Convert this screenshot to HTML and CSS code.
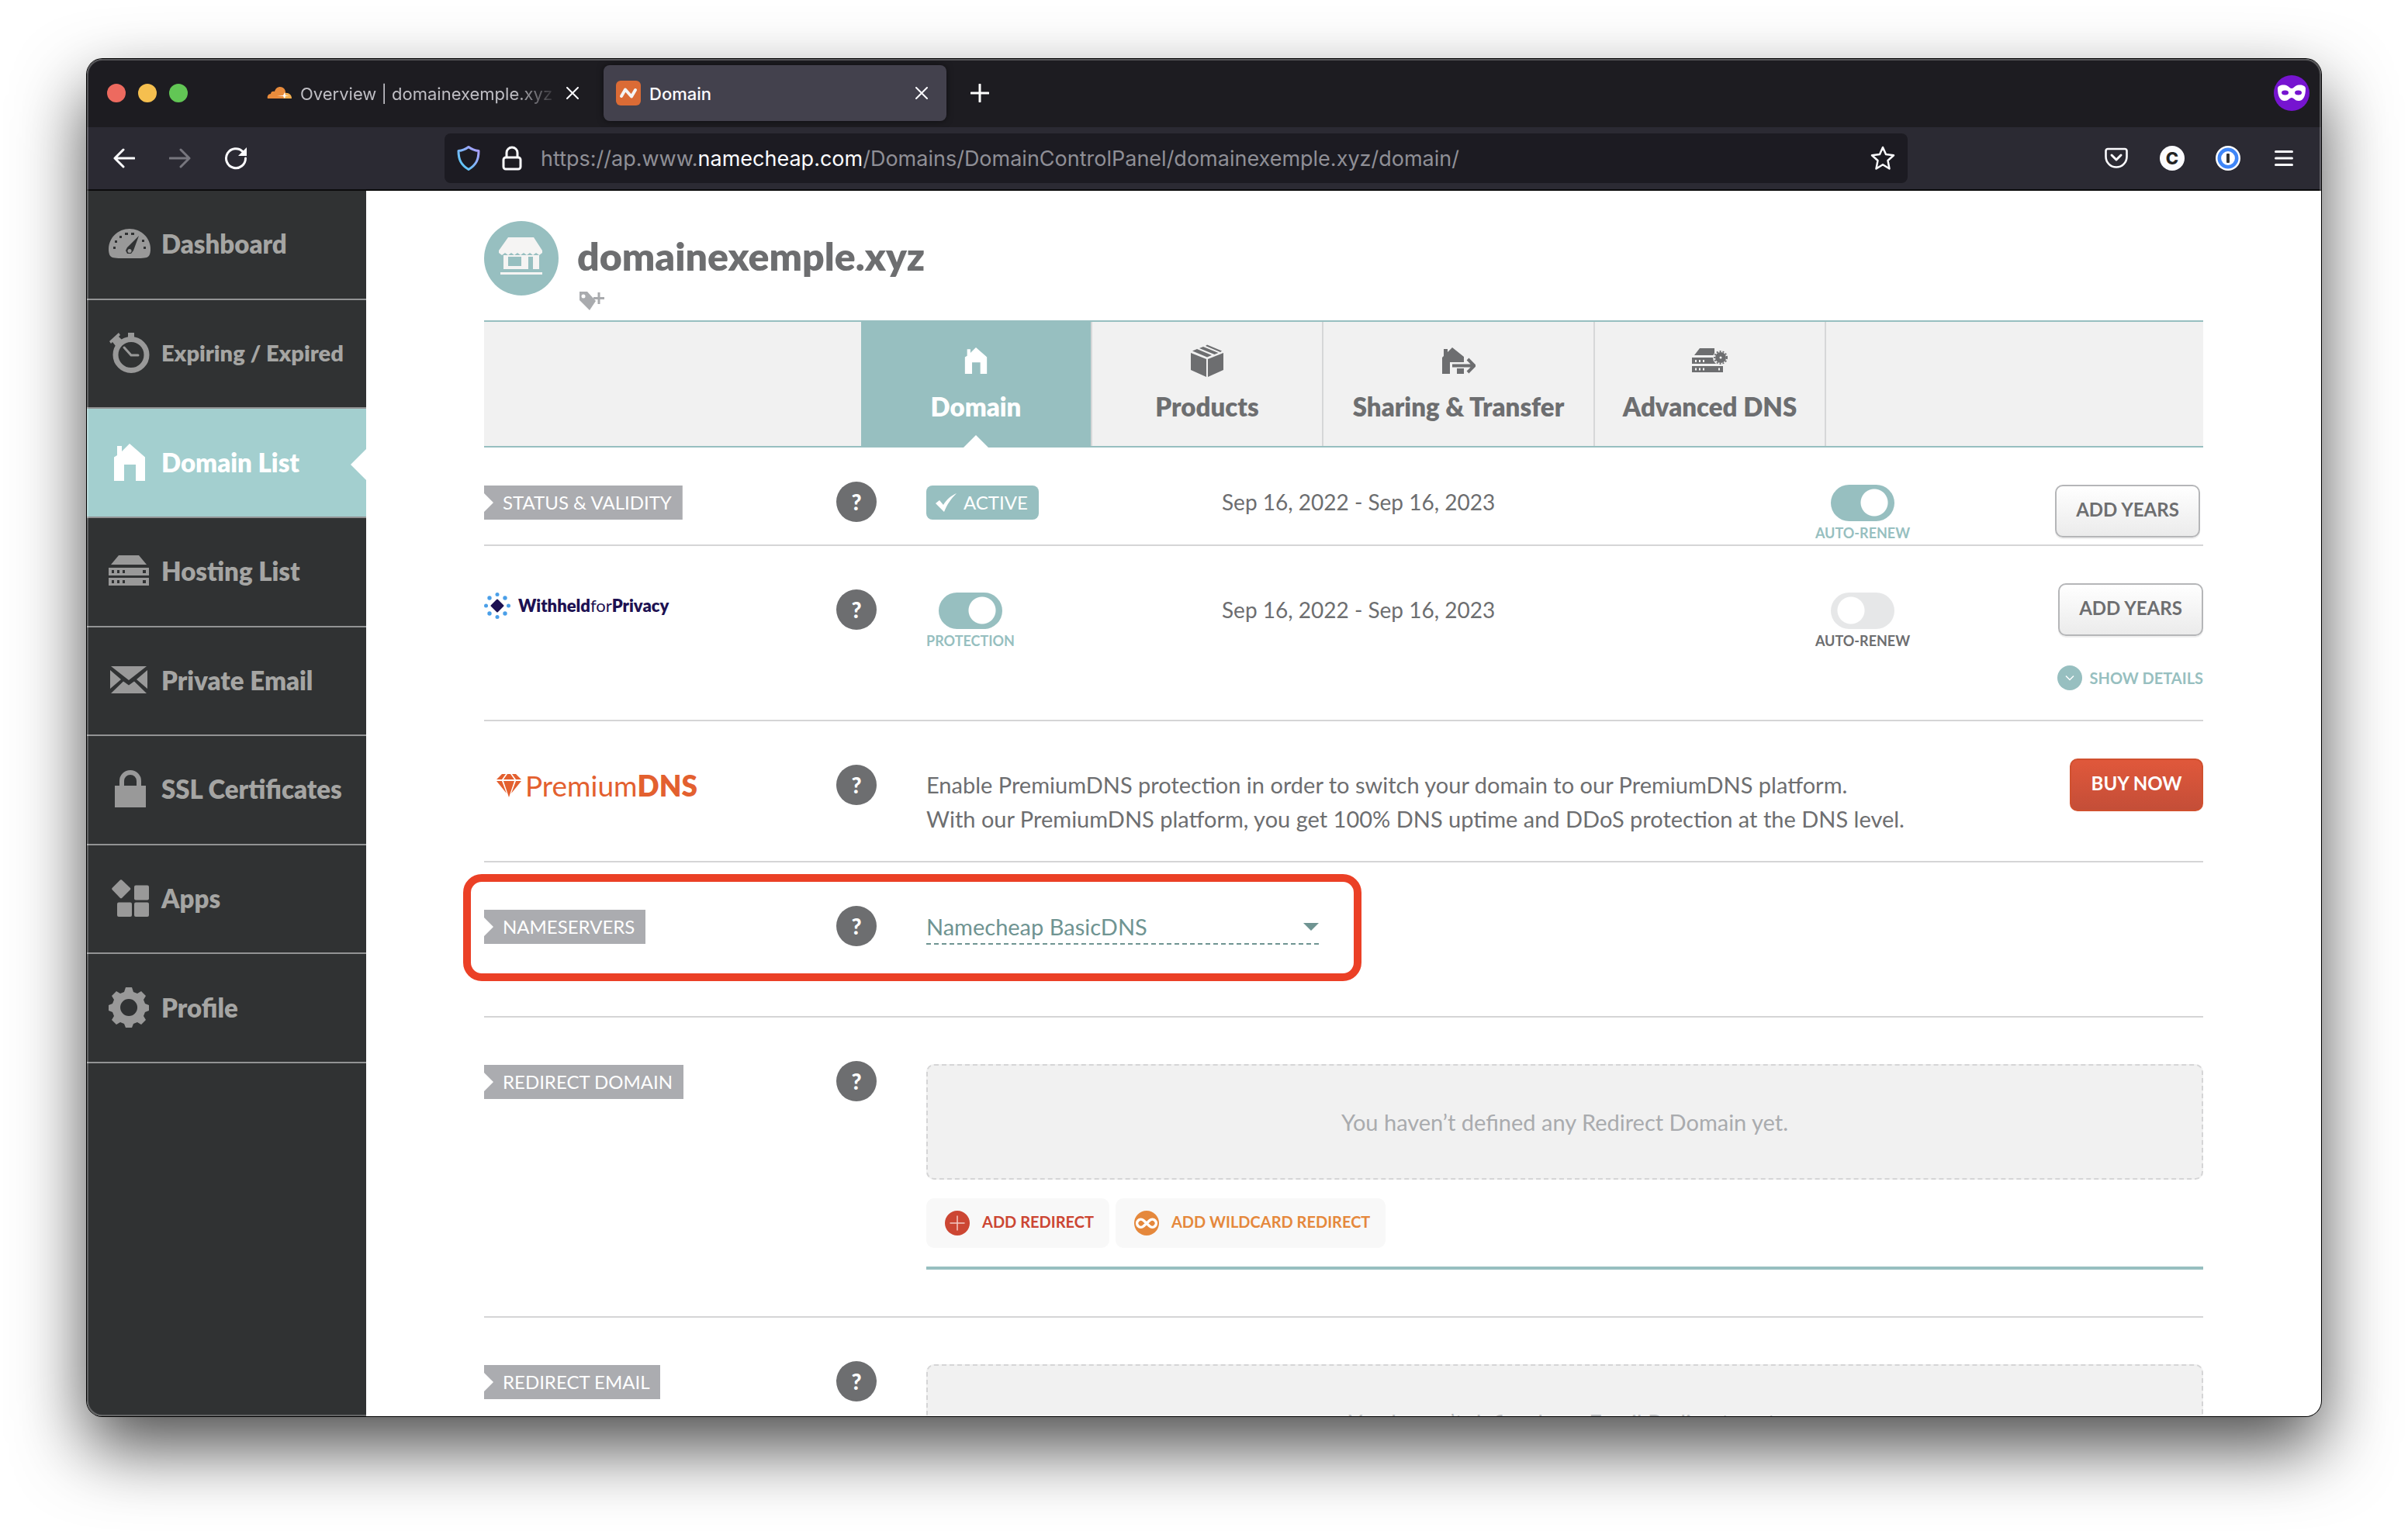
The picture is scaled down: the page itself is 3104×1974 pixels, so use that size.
FILE: index.html
```html
<!DOCTYPE html>
<html lang="en">
<head>
<meta charset="utf-8">
<title>Domain</title>
<meta name="viewport" content="width=device-width, initial-scale=1">
<link rel="stylesheet" href="styles.css">
</head>
<body>
<svg class="defs" aria-hidden="true">
  <symbol id="house" viewBox="0 0 40 48"><path d="M4 15V3h6v7L20 0l20 17.500V48H28V27H13v21H0V17.500z"/></symbol>
  <symbol id="close" viewBox="0 0 16 16"><path d="M1 1l14 14M15 1L1 15" fill="none" stroke="currentColor" stroke-width="2" stroke-linecap="round"/></symbol>
</svg>
<div class="window">
  <header class="tabbar">
    <div class="lights"><i class="light red"></i><i class="light yellow"></i><i class="light green"></i></div>
    <div class="tab">
      <svg width="32" height="32" viewBox="0 0 32 32"><path d="M22 23H1c-1-3 1-6 4-6 0-3 3-4 5-3 1-4 4-6 7-6 4 0 7 3 7 7z" fill="#e88b3c"/><path d="M21 23l2-7c5-1 9 2 9 7z" fill="#f3ae4f"/><path d="M13 19h8l2-4 1 4 5 0-5 1-1 3-2-3z" fill="#fff"/></svg>
      <span class="tab-title fade">Overview | domainexemple.xyz |</span>
      <button class="tab-close" aria-label="Close tab"><svg width="16" height="16"><use href="#close"/></svg></button>
    </div>
    <div class="tab active">
      <svg width="32" height="32" viewBox="0 0 32 32"><rect width="32" height="32" rx="6" fill="#db6b35"/><path d="M7 20l5-8.500 8 9L25 12" fill="none" stroke="#f4f4f4" stroke-width="4" stroke-linecap="round" stroke-linejoin="round"/></svg>
      <span class="tab-title">Domain</span>
      <button class="tab-close" aria-label="Close tab"><svg width="16" height="16"><use href="#close"/></svg></button>
    </div>
    <button class="new-tab" aria-label="New tab"><svg width="24" height="24" viewBox="0 0 24 24"><path d="M12 1v22M1 12h22" stroke="#fff" stroke-width="3" stroke-linecap="round"/></svg></button>
    <svg class="private" width="46" height="46" viewBox="0 0 46 46"><circle cx="23" cy="23" r="23" fill="#7614d0"/><path fill-rule="evenodd" fill="#fff" d="M5 17c0-4 8-6 13-3 2 1 3 3 5 3s3-2 5-3c5-3 13-1 13 3 0 10-3 16-9 16-5 0-6-4-9-4s-4 4-9 4c-6 0-9-6-9-16zm9.500 2.500a4.500 3 0 1 0 .1 6 4.500 3 0 0 0-.1-6zm17 0a4.500 3 0 1 0 .1 6 4.500 3 0 0 0-.1-6z"/></svg>
  </header>
  <div class="toolbar">
    <button class="tool" aria-label="Back"><svg width="28" height="26" viewBox="0 0 28 26"><path d="M27 13H2M13 2L2 13l11 11" fill="none" stroke="#fbfbfe" stroke-width="3" stroke-linecap="round" stroke-linejoin="round"/></svg></button>
    <button class="tool" aria-label="Forward" disabled><svg width="28" height="26" viewBox="0 0 28 26"><path d="M1 13h25M15 2l11 11-11 11" fill="none" stroke="#77767e" stroke-width="3" stroke-linecap="round" stroke-linejoin="round"/></svg></button>
    <button class="tool" aria-label="Reload"><svg width="30" height="30" viewBox="0 0 30 30"><path d="M24 6.500A12.500 12.500 0 1 0 27.500 15" fill="none" stroke="#fbfbfe" stroke-width="3" stroke-linecap="round"/><path d="M29 1v11H18z" fill="#fbfbfe"/></svg></button>
    <div class="urlbar">
      <svg width="30" height="32" viewBox="0 0 30 32"><defs><linearGradient id="sh" x1="1" y1="0" x2="0" y2="1"><stop offset="0" stop-color="#b39aff"/><stop offset="1" stop-color="#4ed0f5"/></linearGradient></defs><path d="M15 1.500c4 3 8 4.500 13 5 0 11-3 18-13 24C5 24.500 2 17.500 2 6.500c5-.5 9-2 13-5z" fill="none" stroke="url(#sh)" stroke-width="3" stroke-linejoin="round"/></svg>
      <svg width="26" height="32" viewBox="0 0 26 32"><path d="M6 15V9a7 7 0 0 1 14 0v6" fill="none" stroke="#fbfbfe" stroke-width="3"/><rect x="2" y="15" width="22" height="15" rx="3" fill="none" stroke="#fbfbfe" stroke-width="3"/></svg>
      <span class="url" role="textbox" aria-label="Address">https://ap.www.<b>namecheap.com</b>/Domains/DomainControlPanel/domainexemple.xyz/domain/</span>
      <svg width="32" height="32" viewBox="0 0 32 32"><path d="M16 2l4 9 10 1.200-7.500 6.800 2 10.500L16 24.300 7.500 29.500l2-10.500L2 12.200 12 11z" fill="none" stroke="#fbfbfe" stroke-width="2.500" stroke-linejoin="round"/></svg>
    </div>
    <button class="tool" aria-label="Save to Pocket"><svg width="30" height="28" viewBox="0 0 30 28"><path d="M4 2h22a2.500 2.500 0 0 1 2.500 2.500V12a13.500 13.500 0 0 1-27 0V4.500A2.500 2.500 0 0 1 4 2z" fill="none" stroke="#fbfbfe" stroke-width="2.600"/><path d="M9 10l6 6 6-6" fill="none" stroke="#fbfbfe" stroke-width="3" stroke-linecap="round" stroke-linejoin="round"/></svg></button>
    <button class="tool" aria-label="Account"><span class="avatar">C</span></button>
    <button class="tool" aria-label="Password manager"><svg width="32" height="32" viewBox="0 0 32 32"><circle cx="16" cy="16" r="16" fill="#fff"/><circle cx="16" cy="16" r="11.200" fill="#fff" stroke="#3f86f7" stroke-width="4.600"/><rect x="14" y="10" width="4" height="12" rx="1" fill="#333"/></svg></button>
    <button class="tool" aria-label="Menu"><svg width="24" height="20" viewBox="0 0 24 20"><path d="M1.500 1.500h21M1.500 10h21M1.500 18.500h21" stroke="#fbfbfe" stroke-width="3" stroke-linecap="round"/></svg></button>
  </div>
  <div class="page">
    <nav class="sidebar">
      <a href="#"><svg width="54" height="38" viewBox="0 0 54 38"><path fill="currentColor" d="M27 0c15 0 27 12 27 26 0 7-2 10-5 11s-10 1-22 1-19 0-22-1-5-4-5-11C0 12 12 0 27 0z"/><path fill="#303233" d="M39 9L24 24l-2 4 2 4h5l3-4zM6 23h3v3H6zM8 15h3v3H8zM14 9h3v3h-3zM21 5h4v3h-4zM29 5h4v3h-4zM43 14h3v3h-3zM45 23h3v3h-3z"/><circle cx="27" cy="28.500" r="2.500" fill="currentColor"/></svg>Dashboard</a>
      <a href="#" class="long"><svg width="54" height="52" viewBox="0 0 54 52"><circle cx="29" cy="28.500" r="20" fill="none" stroke="currentColor" stroke-width="7"/><path d="M25 0h8v9h-8zM1 11L13 0l2 3-2 2 4 4-8 8-4-5-2 2z" fill="currentColor"/><path d="M20 19l9 10h9" fill="none" stroke="currentColor" stroke-width="3" stroke-linecap="round"/></svg>Expiring / Expired</a>
      <a href="#" class="current" aria-current="page"><svg width="54" height="48"><use href="#house" x="7" width="40" height="48"/></svg>Domain List</a>
      <a href="#"><svg width="54" height="40" viewBox="0 0 54 40"><path fill="currentColor" fill-rule="evenodd" d="M13 0h26l10 12H3zM0 16h52v10H0zm4 3v4h3v-4zm7 0v4h3v-4zm7 0v4h3v-4zm26 0v4h4v-4zM0 29h52v10H0zm4 3v4h3v-4zm7 0v4h3v-4zm7 0v4h3v-4zm26 0v4h4v-4z"/></svg>Hosting List</a>
      <a href="#"><svg width="54" height="36" viewBox="0 0 54 36"><path fill="currentColor" d="M3 0h46L26 18zM2 5l14 12L2 29zM50 5L36 17l14 12zM3 35l16-15.500 7 5 7-5L49 35z"/></svg>Private Email</a>
      <a href="#"><svg width="54" height="48" viewBox="0 0 54 48"><rect x="8" y="20" width="40" height="28" fill="currentColor"/><path d="M17 21v-7a11 11 0 0 1 22 0v7" fill="none" stroke="currentColor" stroke-width="6"/></svg>SSL Certificates</a>
      <a href="#"><svg width="54" height="48" viewBox="0 0 54 48" fill="currentColor"><path d="M15 .5q1-.5 2 0l11 10.500q.8 1 0 2L17 24q-1 .6-2 0L4.500 13q-.7-1 0-2z"/><rect x="33" y="7.500" width="19" height="19" rx="2"/><rect x="11" y="29.500" width="19" height="18.500" rx="2"/><rect x="33" y="29.500" width="19" height="18.500" rx="2"/></svg>Apps</a>
      <a href="#"><svg width="54" height="52" viewBox="0 0 54 52"><path fill="currentColor" fill-rule="evenodd" d="M22 0h8l2 6 5 2 5-3 6 6-3 5 2 5 5 2v7l-5 2-2 5 3 5-6 6-5-3-5 2-2 5h-8l-2-5-5-2-5 3-6-6 3-5-2-5-5-2v-7l5-2 2-5-3-5 6-6 5 3 5-2zM26 15a11 11 0 1 0 .1 22A11 11 0 0 0 26 15z"/></svg>Profile</a>
    </nav>
    <main class="content">
      <div class="title">
        <svg width="96" height="96" viewBox="0 0 96 96"><circle cx="48" cy="48" r="48" fill="#97bfc0"/><path fill="#f5f4f3" fill-rule="evenodd" d="M31 21h33l11 17v3l-4 3-4-3-4 3-4-3-4 3-4-3-4 3-4-3-4 3-4-3-4 3-4-3-4 3-4-3v-3zM25 44h46v18h-8V46h-6v16H25zm6 2v12h17V46zM21 66h54v3H21z"/></svg>
        <div>
          <h1>domainexemple.xyz</h1>
          <button class="tag-add" aria-label="Add tag"><svg width="34" height="26" viewBox="0 0 34 26"><path d="M1 1h10l11 12-8 12L1 12z" fill="#a9abae"/><circle cx="6" cy="7" r="2.500" fill="#fff"/><path d="M26 2v15M19 9.500h14" stroke="#a9abae" stroke-width="3"/></svg></button>
        </div>
      </div>
      <nav class="tabs">
        <a href="#" class="selected" aria-current="page"><svg width="30" height="34"><use href="#house" width="30" height="34"/></svg>Domain</a>
        <a href="#"><svg width="42" height="42" viewBox="0 0 42 42" fill="currentColor"><path d="M0 11l20 8v23L0 33zM42 11l-20 8v23l20-9zM2 8.500l6-2.500 19 8-6 2.500zM11 5l5-2 19.500 8-5 2zM19 2l2-1.500L40 8.500 38 10z"/></svg>Products</a>
        <a href="#" class="wide"><svg width="44" height="34" viewBox="0 0 44 34"><path fill="currentColor" d="M3 11V2h5v4l6-6 15 12v7H11v15H1V13zM20 27h9v7h-9z"/><path d="M14 23.500h27M34 15l8.500 8.500L34 32" fill="none" stroke="currentColor" stroke-width="4"/></svg>Sharing &amp; Transfer</a>
        <a href="#"><svg width="46" height="32" viewBox="0 0 46 32"><path fill="currentColor" fill-rule="evenodd" d="M10 0h19v9H3zM0 12h28l4 8H0zm4 3v3h2v-3zm5 0v3h2v-3zm5 0v3h2v-3zM0 23h40v8H0zm4 2.500v3h2v-3zm5 0v3h2v-3zm5 0v3h2v-3zm20 0v3h2v-3z"/><circle cx="37" cy="12" r="9" fill="none" stroke="#f1f1f1" stroke-width="2"/><circle cx="37" cy="12" r="7" fill="currentColor"/><circle cx="37" cy="12" r="8" fill="none" stroke="currentColor" stroke-width="2" stroke-dasharray="2 2"/><circle cx="37" cy="12" r="1.500" fill="#f1f1f1"/></svg>Advanced DNS</a>
      </nav>

      <section class="row status">
        <div><h2 class="ribbon">STATUS &amp; VALIDITY</h2></div>
        <button class="help" aria-label="Help">?</button>
        <div class="cells">
          <div><span class="badge"><svg width="28" height="24" viewBox="0 0 28 24"><path d="M0 13l5-4 5 6C14 8 20 3 27 0 20 7 15 14 11 24z" fill="#fff"/></svg>ACTIVE</span></div>
          <p class="text">Sep 16, 2022 - Sep 16, 2023</p>
          <label class="switch on"><input type="checkbox" checked>AUTO-RENEW</label>
          <div class="actions"><button class="btn">ADD YEARS</button></div>
        </div>
      </section>

      <section class="row privacy">
        <div><h2 class="wfp"><svg width="34" height="34" viewBox="0 0 34 34"><path d="M17 9.500l7.500 7.500-7.500 7.500L9.500 17z" fill="#1d1152" stroke="#1d1152" stroke-width="2" stroke-linejoin="round"/><g fill="#4a9fe8"><circle cx="17" cy="2.500" r="2.500"/><circle cx="17" cy="31.500" r="2.500"/><circle cx="2.500" cy="17" r="2.500"/><circle cx="31.500" cy="17" r="2.500"/><circle cx="7" cy="7" r="2.700"/><circle cx="27" cy="7" r="2.700"/><circle cx="7" cy="27" r="2.700"/><circle cx="27" cy="27" r="2.700"/></g></svg><span>Withheld<i>for</i>Privacy</span></h2></div>
        <button class="help" aria-label="Help">?</button>
        <div class="cells">
          <div><label class="switch on"><input type="checkbox" checked>PROTECTION</label></div>
          <p class="text">Sep 16, 2022 - Sep 16, 2023</p>
          <label class="switch"><input type="checkbox">AUTO-RENEW</label>
          <div class="actions"><button class="btn">ADD YEARS</button>
            <button class="details"><svg width="32" height="32" viewBox="0 0 32 32"><circle cx="16" cy="16" r="16" fill="#97bfc0"/><path d="M11 13.500l5 5 5-5" fill="none" stroke="#fff" stroke-width="1.500"/></svg>SHOW DETAILS</button></div>
        </div>
      </section>

      <section class="row premium">
        <div><h2 class="pdns"><svg width="32" height="30" viewBox="0 0 32 30" fill="#e3602f"><path d="M7 0h5L7 7H0zM14 0h4l5 7H9zM20 0h5l7 7h-7zM0 9h7l6 16zM9 9h14l-7 21zM25 9h7L19 25z"/></svg><span>Premium<b>DNS</b></span></h2></div>
        <button class="help" aria-label="Help">?</button>
        <div class="offer">
          <p class="text">Enable PremiumDNS protection in order to switch your domain to our PremiumDNS platform.<br>With our PremiumDNS platform, you get 100% DNS uptime and DDoS protection at the DNS level.</p>
          <button class="btn buy">BUY NOW</button>
        </div>
      </section>

      <section class="row nameservers">
        <div><h2 class="ribbon">NAMESERVERS</h2></div>
        <button class="help" aria-label="Help">?</button>
        <div><div class="select"><select aria-label="Nameservers"><option>Namecheap BasicDNS</option></select><svg width="20" height="10" viewBox="0 0 20 10"><path d="M0 0h20L10 10z" fill="#6f9492"/></svg></div></div>
        <div class="highlight"></div>
      </section>

      <section class="row redirect">
        <div><h2 class="ribbon">REDIRECT DOMAIN</h2></div>
        <button class="help" aria-label="Help">?</button>
        <div>
          <p class="empty">You haven’t defined any Redirect Domain yet.</p>
          <div class="adders">
            <button class="add"><svg width="32" height="32" viewBox="0 0 32 32"><circle cx="16" cy="16" r="16" fill="#cc4633"/><path d="M16 6.500v19M6.500 16h19" stroke="#f3c9c3" stroke-width="1.500"/></svg><span>ADD REDIRECT</span></button>
            <button class="add wild"><svg width="32" height="32" viewBox="0 0 32 32"><circle cx="16" cy="16" r="16" fill="#e5883c"/><path d="M20 12.500a5 5 0 1 1 0 7.500l-8-7.500a5 5 0 1 0 0 7.500z" fill="none" stroke="#fff" stroke-width="3.500" stroke-linejoin="round"/></svg><span>ADD WILDCARD REDIRECT</span></button>
          </div>
          <hr>
        </div>
      </section>

      <section class="row email">
        <div><h2 class="ribbon">REDIRECT EMAIL</h2></div>
        <button class="help" aria-label="Help">?</button>
        <div><p class="empty">You haven’t defined any Email Redirects yet.</p></div>
      </section>
    </main>
  </div>
</div>
</body>
</html>
```

FILE: styles.css
```css
* { box-sizing: border-box; }
body {
  margin: 0;
  padding: 76px 112px 148px;
  height: 100vh;
  overflow: hidden;
  background: #fff;
  font-family: Lato, "Open Sans", sans-serif;
  color: #6d6e70;
}
h1, h2, p { margin: 0; font-weight: inherit; }
a { color: inherit; text-decoration: none; }
button {
  margin: 0;
  padding: 0;
  border: 0;
  background: none;
  color: inherit;
  font: inherit;
  display: flex;
  align-items: center;
  justify-content: center;
}
svg { flex: none; display: block; }
.defs { position: absolute; width: 0; height: 0; }
#house { fill: currentColor; }

.window {
  position: relative;
  height: 100%;
  display: flex;
  flex-direction: column;
  border-radius: 20px;
  overflow: hidden;
  background: #fff;
  box-shadow: 0 0 0 1px #000, 0 40px 90px rgba(0, 0, 0, .7);
}
.window::after {
  content: "";
  position: absolute;
  inset: 0;
  border-radius: 20px;
  box-shadow: inset 0 0 0 2px rgba(255, 255, 255, .25);
  pointer-events: none;
}

/* Browser chrome */
.tabbar, .toolbar { font-family: Inter, "Liberation Sans", sans-serif; color: #fbfbfe; display: flex; align-items: center; flex: none; }
.tabbar { height: 88px; padding: 0 15px 0 26px; background: #1d1c21; }
.lights { display: flex; gap: 16px; margin-right: 86px; }
.light { width: 24px; height: 24px; border-radius: 50%; }
.red { background: #ed6a5f; }
.yellow { background: #f5bf4f; }
.green { background: #62c655; }
.tab {
  width: 442px;
  height: 72px;
  margin-right: 8px;
  padding: 0 16px;
  display: flex;
  align-items: center;
  gap: 11px;
  border-radius: 8px;
  font-size: 22px;
  color: #bfbec4;
}
.tab.active { background: #43414d; color: #fbfbfe; font-weight: 500; box-shadow: 0 0 8px rgba(0, 0, 0, .5); }
.tab-title { flex: 1; min-width: 0; padding-top: 2px; white-space: nowrap; }
.fade {
  -webkit-mask-image: linear-gradient(to right, #000 calc(100% - 60px), transparent);
  mask-image: linear-gradient(to right, #000 calc(100% - 60px), transparent);
}
.tab-close { width: 32px; height: 32px; margin-left: -11px; color: #fbfbfe; }
.new-tab { width: 40px; height: 40px; margin-left: 15px; }
.private { margin-left: auto; }
.toolbar { height: 82px; padding: 0 12px; background: #2b2a33; border-bottom: 2px solid #0c0c0d; }
.tool { width: 72px; height: 64px; flex: none; }
.urlbar {
  flex: 1;
  height: 64px;
  margin: 0 233px;
  padding: 0 16px;
  display: flex;
  align-items: center;
  gap: 28px;
  border-radius: 8px;
  background: #1c1b22;
}
.url { flex: 1; margin-left: -4px; font-size: 27px; color: #8f8f96; white-space: nowrap; }
.url b { font-weight: 400; color: #fbfbfe; }
.avatar { width: 32px; height: 32px; border-radius: 50%; background: #fbfbfe; color: #222; font-size: 22px; font-weight: 800; line-height: 32px; text-align: center; }

/* Page */
.page { flex: 1; min-height: 0; display: flex; }
.sidebar {
  flex: none;
  width: 360px;
  background: #303233;
  color: #a5a5a3;
  display: grid;
  grid-template-rows: repeat(8, 1fr);
  padding-bottom: 455px;
}
.sidebar a {
  position: relative;
  display: flex;
  align-items: center;
  gap: 14px;
  padding: 0 0 2px 28px;
  border-bottom: 2px solid #929394;
  font-size: 33px;
  font-weight: 800;
  white-space: nowrap;
}
.sidebar svg { color: #999; }
.sidebar .long { font-size: 29px; }
.sidebar .current, .sidebar .current svg { color: #fff; }
.sidebar .current { background: #a3cfcf; }
.sidebar .current::after {
  content: "";
  position: absolute;
  right: 0;
  top: 52px;
  border: 20px solid transparent;
  border-left: 0;
  border-right-color: #fff;
}

.content { flex: 1; min-width: 0; padding: 39px 152px 0; overflow: hidden; }
.title { display: flex; gap: 24px; height: 128px; }
h1 { font-size: 50px; line-height: 90px; font-weight: 800; }
.tag-add { margin-left: 2px; }
.tabs {
  display: flex;
  height: 164px;
  padding-left: 486px;
  background: #f1f1f1;
  border: solid #97bfc0;
  border-width: 2px 0;
}
.tabs a {
  position: relative;
  width: 298px;
  padding-top: 28px;
  display: grid;
  grid-template-rows: 44px 46px;
  row-gap: 14px;
  place-items: center;
  align-content: start;
  border-right: 2px solid #d6d7d8;
  font-size: 33px;
  font-weight: 800;
}
.tabs .wide { width: 350px; }
.tabs .selected { background: #97bfc0; color: #fff; }
.tabs .selected::after {
  content: "";
  position: absolute;
  left: 50%;
  bottom: -2px;
  margin-left: -16px;
  border: 16px solid transparent;
  border-top: 0;
  border-bottom-color: #fff;
}

.row {
  position: relative;
  display: grid;
  grid-template-columns: 454px 116px 1fr;
  align-items: start;
  padding-top: 48px;
  border-bottom: 2px solid #d5d5d6;
}
.status { min-height: 127px; padding-top: 36px; }
.privacy { min-height: 226px; }
.premium { min-height: 182px; }
.nameservers { min-height: 200px; }
.redirect { min-height: 387px; }
.ribbon {
  display: inline-block;
  margin-top: 13px;
  padding: 0 14px 0 24px;
  background: #abacb0;
  color: #fff;
  font-size: 24px;
  line-height: 44px;
  vertical-align: top;
  clip-path: polygon(0 0, 100% 0, 100% 100%, 0 100%, 0 34px, 12px 22px, 0 10px);
}
.help { width: 52px; height: 52px; margin-top: 8px; border-radius: 50%; background: #6d6e70; color: #fff; font-size: 28px; font-weight: 900; }
.cells { display: grid; grid-template-columns: 381px 1fr 120px 379px; align-items: start; }
.badge {
  display: inline-flex;
  align-items: center;
  gap: 8px;
  margin-top: 13px;
  padding: 0 14px 0 12px;
  border-radius: 8px;
  background: #97bfc0;
  color: #fff;
  font-size: 24px;
  line-height: 44px;
}
.text { margin-top: 12px; font-size: 28px; line-height: 44px; }
.offer .text { font-size: 29px; }
.switch { display: inline-flex; flex-direction: column; align-items: center; gap: 4px; margin-top: 12px; font-size: 18px; line-height: 22px; font-weight: 700; white-space: nowrap; }
.switch.on { color: #97bfc0; }
.switch input { appearance: none; margin: 0; width: 82px; height: 47px; border-radius: 24px; background: radial-gradient(circle at 26px 23px, #fff 17px, #e6e7e8 18px); }
.switch input:checked { background: radial-gradient(circle at 56px 23px, #fff 17px, #97bfc0 18px); }
.actions { display: flex; flex-direction: column; align-items: flex-end; gap: 38px; }
.status .actions { padding: 12px 4px 0 0; }
.btn {
  width: 187px;
  height: 68px;
  padding-bottom: 6px;
  border: 2px solid #b5b6b8;
  border-radius: 10px;
  background: linear-gradient(#fff, #ebebeb);
  box-shadow: 0 2px 1px #eee;
  font-size: 24px;
  font-weight: 700;
}
.buy { width: 172px; flex: none; border-color: #d0502f; background: linear-gradient(#e0583b, #c44e38); color: #fff; box-shadow: none; }
.details { gap: 10px; color: #97bfc0; font-size: 20px; font-weight: 700; }
.wfp { display: flex; align-items: center; gap: 10px; margin-top: 12px; color: #1d1152; font-size: 22px; font-weight: 800; line-height: 34px; }
.wfp i { font-style: normal; font-weight: 400; }
.pdns { display: flex; align-items: center; gap: 5px; margin: 13px 0 0 16px; color: #e3602f; font-size: 37px; line-height: 44px; }
.pdns b { font-weight: 800; }
.offer { display: flex; justify-content: space-between; }
.select { position: relative; width: 506px; margin-top: 12px; }
.select select {
  display: block;
  appearance: none;
  width: 100%;
  height: 46px;
  padding: 0;
  border: 0;
  border-bottom: 2px dashed #6f9492;
  border-radius: 0;
  background: none;
  color: #6f9492;
  font: 29px Lato, "Open Sans", sans-serif;
}
.select svg { position: absolute; right: 0; top: 18px; pointer-events: none; }
.highlight { position: absolute; left: -27px; top: 15px; width: 1158px; height: 138px; border: 10px solid #eb4026; border-radius: 24px; pointer-events: none; }
.empty { margin-top: 12px; height: 149px; border: 2px dashed #d5d5d6; border-radius: 10px; background: #f1f1f1; color: #a9abae; font-size: 29px; line-height: 145px; text-align: center; }
.adders { display: flex; gap: 8px; margin: 24px 0; }
.add { height: 64px; padding: 0 20px 0 24px; gap: 16px; border-radius: 10px; background: #f8f8f8; color: #cc4633; font-size: 20px; font-weight: 700; }
.add span { padding-bottom: 4px; }
.wild { color: #e5883c; }
hr { margin: 0; height: 4px; border: 0; background: #97bfc0; }
.email { border: 0; }
```
